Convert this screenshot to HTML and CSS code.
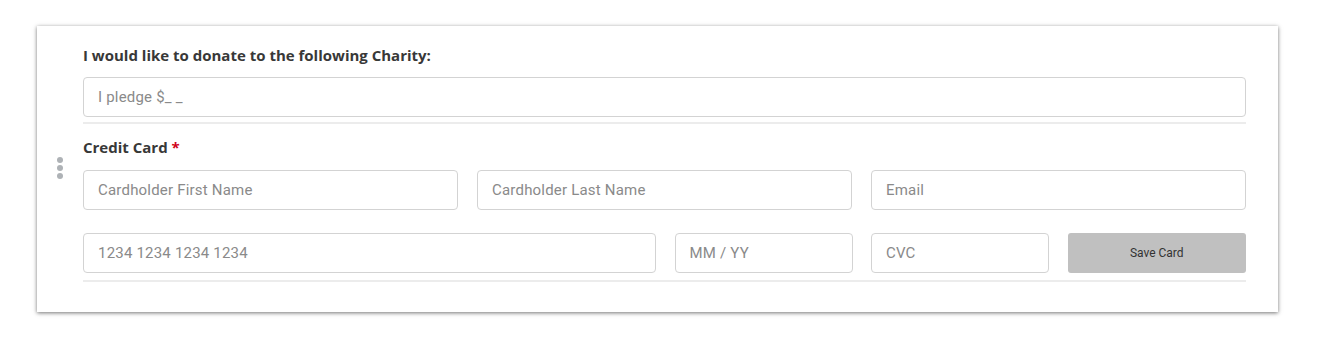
FILE: index.html
```html
<!DOCTYPE html>
<html lang="en">
<head>
    <meta charset="UTF-8">
    <meta name="viewport" content="width=device-width, initial-scale=1.0">
    <title>Donation</title>
    <link rel="stylesheet" href="styles.css">
</head>
<body>
    <div class="card">
        <div class="field">
            <label class="label" for="pledge">I would like to donate to the following Charity:</label>
            <input class="input" id="pledge" type="text" placeholder="I pledge $_ _">
            <div class="divider"></div>
        </div>

        <div class="field field-cc">
            <div class="handle"><span></span><span></span><span></span></div>
            <div class="label">Credit Card <span class="req">*</span></div>
            <div class="row row-names">
                <input class="input" type="text" placeholder="Cardholder First Name">
                <input class="input" type="text" placeholder="Cardholder Last Name">
                <input class="input" type="text" placeholder="Email">
            </div>
            <div class="row row-card">
                <input class="input" type="text" placeholder="1234 1234 1234 1234">
                <input class="input" type="text" placeholder="MM / YY">
                <input class="input" type="text" placeholder="CVC">
                <button class="btn" type="button">Save Card</button>
            </div>
            <div class="divider divider-last"></div>
        </div>
    </div>
</body>
</html>
```

FILE: styles.css
```css
body {
    margin: 0;
    padding: 26px 0 29px 37px;
    background: #fff;
    font-family: 'Roboto', 'Liberation Sans', sans-serif;
}

.card {
    box-sizing: border-box;
    width: 1241px;
    height: 286px;
    padding: 19px 32px 0 46px;
    background: #fff;
    box-shadow: 0 1px 4px rgba(0,0,0,0.55);
}

.field {
    position: relative;
}

.label {
    display: block;
    font-family: 'Open Sans', 'Roboto', sans-serif;
    font-size: 15px;
    line-height: 20px;
    font-weight: bold;
    color: #383838;
    margin-bottom: 12px;
}

.field-cc .label {
    margin-top: 13px;
    margin-bottom: 13px;
}

.req {
    color: #d0021b;
}

.input {
    box-sizing: border-box;
    display: block;
    width: 100%;
    height: 40px;
    padding: 0 14px;
    border: 1px solid #d3d3d3;
    border-radius: 4px;
    font-family: inherit;
    font-size: 15px;
    letter-spacing: 0.2px;
    color: #333;
    background: #fff;
    outline: none;
}

.input::placeholder {
    color: #8a8a8a;
}

.divider {
    height: 2px;
    margin-top: 5px;
    background: #ececec;
}

.divider-last {
    margin-top: 7px;
}

.row {
    display: grid;
    column-gap: 19px;
}

.row-names {
    grid-template-columns: 1fr 1fr 1fr;
}

.row-card {
    grid-template-columns: 573px 178px 178px 1fr;
    column-gap: 18.5px;
    margin-top: 23px;
}

.btn {
    height: 40px;
    border: none;
    border-radius: 3px;
    background: #c0c0c0;
    color: #333;
    font-family: inherit;
    font-size: 12px;
}

.handle {
    position: absolute;
    left: -26px;
    top: 20px;
    display: flex;
    flex-direction: column;
    gap: 2px;
}

.handle span {
    width: 6px;
    height: 6px;
    border-radius: 50%;
    background: #aeb2b6;
}
```
